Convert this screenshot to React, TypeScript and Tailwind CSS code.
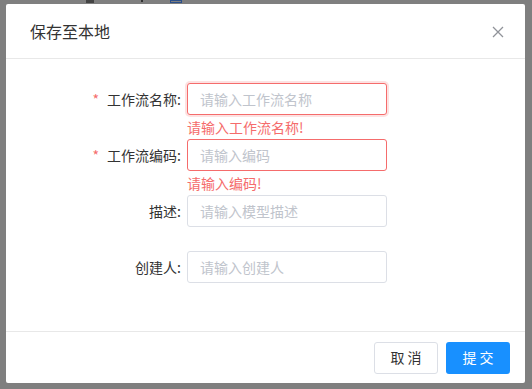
import React from 'react'

type Field = {
  label: string
  placeholder: string
  required?: boolean
  error?: string
  focused?: boolean
}

const fields: Field[] = [
  { label: '工作流名称', placeholder: '请输入工作流名称', required: true, error: '请输入工作流名称!', focused: true },
  { label: '工作流编码', placeholder: '请输入编码', required: true, error: '请输入编码!' },
  { label: '描述', placeholder: '请输入模型描述' },
  { label: '创建人', placeholder: '请输入创建人' },
]

function FormRow({ field }: { field: Field }) {
  const border = field.error
    ? field.focused
      ? 'border-[#f56c6c] shadow-[0_0_0_2px_rgba(245,108,108,0.2)]'
      : 'border-[#f56c6c]'
    : 'border-[#dcdfe6]'

  return (
    <div className="flex">
      <div className="w-[181px] h-[32px] pr-[6px] flex items-center justify-end text-[14px] text-[#333]">
        {field.required && <span className="text-[#f56c6c] mr-[8px]">*</span>}
        <span>{field.label}:</span>
      </div>
      <div className="flex flex-col">
        <div
          className={`w-[200px] h-[32px] border rounded-[3px] bg-white px-[12px] flex items-center text-[14px] text-[#c0c4cc] ${border}`}
        >
          {field.placeholder}
        </div>
        <div className="h-[24px] flex items-center text-[14px] text-[#f56c6c]">{field.error}</div>
      </div>
    </div>
  )
}

export default function App() {
  return (
    <div
      className="w-[532px] h-[389px] bg-[#7f7f7f] pt-[4px] pl-[6px] relative overflow-hidden"
      style={{ fontFamily: '"Noto Sans CJK SC", "Noto Sans", sans-serif' }}
    >
      {/* bits of the page behind the mask */}
      <div className="absolute top-0 left-[86px] w-[8px] h-[3px] bg-[#444]" />
      <div className="absolute top-0 left-[141px] w-[2px] h-[2px] bg-[#333]" />
      <div className="absolute top-0 left-[170px] w-[12px] h-[3px] border border-[#2a4f8a]" />

      <div className="w-[519px] h-[379px] bg-white rounded-[2px] flex flex-col">
        {/* Header */}
        <div className="h-[55px] border-b border-[#e8e8e8] flex items-center justify-between pl-[24px] pr-[21px]">
          <span className="text-[16px] text-[#333]">保存至本地</span>
          <svg width="12" height="12" viewBox="0 0 12 12" className="mt-[1px]">
            <path d="M1 1L11 11M11 1L1 11" stroke="#909399" strokeWidth="1.3" fill="none" />
          </svg>
        </div>

        {/* Body */}
        <div className="flex-1 pt-[24px] flex flex-col">
          {fields.map((f) => (
            <FormRow key={f.label} field={f} />
          ))}
        </div>

        {/* Footer */}
        <div className="h-[52px] border-t border-[#e8e8e8] flex items-center justify-end gap-[8px] pr-[15px]">
          <button className="w-[64px] h-[32px] border border-[#dcdfe6] rounded-[3px] bg-white text-[14px] text-[#333]">
            取 消
          </button>
          <button className="w-[64px] h-[32px] rounded-[3px] bg-[#1890ff] text-[14px] text-white">提 交</button>
        </div>
      </div>
    </div>
  )
}
